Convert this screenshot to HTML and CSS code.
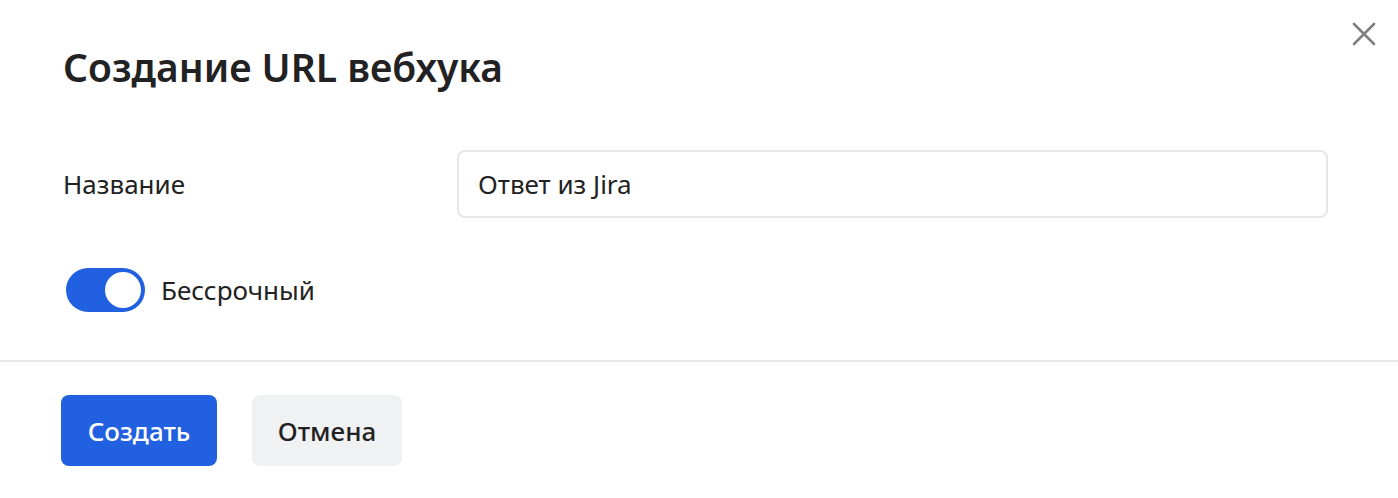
FILE: index.html
```html
<!DOCTYPE html>
<html lang="ru">
<head>
<meta charset="utf-8">
<title>Создание URL вебхука</title>
<link rel="stylesheet" href="styles.css">
</head>
<body>
<div class="modal">
  <button class="close" aria-label="Закрыть">
    <svg width="24" height="24" viewBox="0 0 24 24"><path d="M2 2L22 22M22 2L2 22" stroke="#808080" stroke-width="2.6" stroke-linecap="round"/></svg>
  </button>
  <div class="body">
    <h1 class="title">Создание URL вебхука</h1>
    <div class="field">
      <label class="label">Название</label>
      <div class="input">Ответ из Jira</div>
    </div>
    <div class="switch-row">
      <span class="switch"><span class="knob"></span></span>
      <span class="switch-label">Бессрочный</span>
    </div>
  </div>
  <div class="footer">
    <button class="btn primary">Создать</button>
    <button class="btn secondary">Отмена</button>
  </div>
</div>
</body>
</html>
```
FILE: styles.css
```css
html, body {
  margin: 0;
  padding: 0;
  background: #ffffff;
}
body {
  font-family: "Noto Sans", "Open Sans", sans-serif;
  color: #222222;
}
.modal {
  position: relative;
  width: 1398px;
  height: 498px;
  box-sizing: border-box;
}
.close {
  position: absolute;
  top: 22px;
  right: 22px;
  width: 24px;
  height: 24px;
  padding: 0;
  border: 0;
  background: transparent;
  display: flex;
}
.body {
  padding: 39px 70px 0 63px;
  height: 362px;
  box-sizing: border-box;
  border-bottom: 2px solid #e6e6e6;
}
.title {
  margin: 0;
  font-size: 39px;
  font-weight: 600;
  line-height: 56px;
  color: #222222;
}
.field {
  display: grid;
  grid-template-columns: 394px 871px;
  align-items: center;
  margin-top: 55px;
}
.label {
  font-size: 26px;
}
.input {
  height: 68px;
  box-sizing: border-box;
  border: 2px solid #e6e6e6;
  border-radius: 8px;
  padding: 0 19px;
  display: flex;
  align-items: center;
  font-size: 26px;
  color: #222222;
}
.switch-row {
  display: flex;
  align-items: center;
  gap: 16px;
  margin-top: 50px;
  margin-left: 3px;
}
.switch {
  width: 79px;
  height: 44px;
  border-radius: 22px;
  background: #2160e0;
  display: flex;
  align-items: center;
  justify-content: flex-end;
  padding: 0 4px;
  box-sizing: border-box;
}
.knob {
  width: 36px;
  height: 36px;
  border-radius: 50%;
  background: #ffffff;
}
.switch-label {
  font-size: 26px;
}
.footer {
  display: flex;
  gap: 35px;
  padding: 33px 0 0 61px;
}
.btn {
  height: 71px;
  border: 0;
  border-radius: 8px;
  font-family: inherit;
  font-size: 26px;
  font-weight: 500;
  padding: 0;
  display: flex;
  align-items: center;
  justify-content: center;
}
.primary {
  width: 156px;
  background: #2160e0;
  color: #ffffff;
}
.secondary {
  width: 150px;
  background: #f0f1f3;
  color: #222222;
}
```
